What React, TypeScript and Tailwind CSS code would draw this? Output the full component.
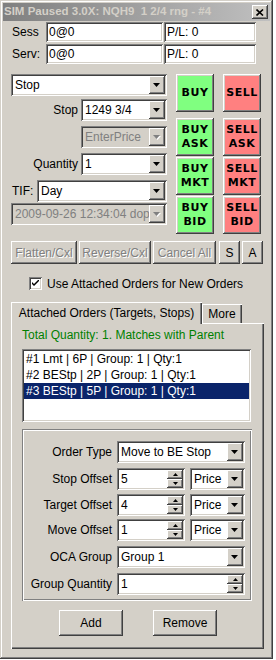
import React from "react";

const raised =
  "shadow-[inset_-1px_-1px_0_#404040,inset_1px_1px_0_#ffffff,inset_-2px_-2px_0_#808080,inset_2px_2px_0_#d4d0c8]";
const sunken =
  "shadow-[inset_1px_1px_0_#808080,inset_-1px_-1px_0_#ffffff,inset_2px_2px_0_#404040,inset_-2px_-2px_0_#d4d0c8]";
const etched =
  "shadow-[inset_1px_1px_0_#808080,inset_-1px_-1px_0_#ffffff,inset_2px_2px_0_#ffffff,inset_-2px_-2px_0_#808080]";
const dimText = "text-[#808080] [text-shadow:1px_1px_0_#ffffff]";

const Arrow = ({ disabled }: { disabled?: boolean }) => (
  <svg width="8" height="5" viewBox="0 0 8 5">
    {disabled && <polygon points="1,1 8,1 4.5,5" fill="#ffffff" />}
    <polygon points="0,0 7,0 3.5,4" fill={disabled ? "#808080" : "#000000"} />
  </svg>
);

const DropBtn = ({ disabled }: { disabled?: boolean }) => (
  <div className={`w-[16px] h-[18px] shrink-0 bg-[#d4d0c8] flex items-center justify-center ${raised}`}>
    <Arrow disabled={disabled} />
  </div>
);

const Select = ({
  value,
  className,
  disabled,
}: {
  value: string;
  className: string;
  disabled?: boolean;
}) => (
  <div
    className={`h-[22px] flex items-center p-[2px] ${sunken} ${
      disabled ? "bg-[#d4d0c8] text-[#808080]" : "bg-white"
    } ${className}`}
  >
    <span className="flex-1 pl-[2px] whitespace-nowrap overflow-hidden">{value}</span>
    <DropBtn disabled={disabled} />
  </div>
);

const SpinBtn = ({ up }: { up?: boolean }) => (
  <div className={`w-[16px] h-[9px] bg-[#d4d0c8] flex items-center justify-center ${raised}`}>
    <svg width="5" height="3" viewBox="0 0 5 3">
      <polygon points={up ? "2.5,0 5,3 0,3" : "0,0 5,0 2.5,3"} fill="#000000" />
    </svg>
  </div>
);

const Spin = ({ value, className }: { value: string; className: string }) => (
  <div className={`h-[22px] flex items-center p-[2px] bg-white ${sunken} ${className}`}>
    <span className="flex-1 pl-[2px]">{value}</span>
    <div className="flex flex-col">
      <SpinBtn up />
      <SpinBtn />
    </div>
  </div>
);

const Trade = ({ top, bottom, buy }: { top: string; bottom?: string; buy?: boolean }) => (
  <div
    className={`w-[38px] h-[38px] flex flex-col items-center justify-center font-['DejaVu_Sans',sans-serif] font-bold text-[11px] leading-[14px] tracking-[0.5px] ${raised} ${
      buy ? "bg-[#80ff80]" : "bg-[#ff8080]"
    }`}
  >
    <span>{top}</span>
    {bottom && <span>{bottom}</span>}
  </div>
);

const Btn = ({
  label,
  className,
  dim,
}: {
  label: string;
  className: string;
  dim?: boolean;
}) => (
  <div
    className={`flex items-center justify-center bg-[#d4d0c8] whitespace-nowrap ${raised} ${
      dim ? dimText : ""
    } ${className}`}
  >
    {label}
  </div>
);

const Row = ({ label, children }: { label: string; children: React.ReactNode }) => (
  <div className="flex items-center">
    <div className="w-[95px] pr-[5px] text-right whitespace-nowrap">{label}</div>
    {children}
  </div>
);

export default function App() {
  const items = [
    "#1 Lmt | 6P | Group: 1 | Qty:1",
    "#2 BEStp | 2P | Group: 1 | Qty:1",
    "#3 BEStp | 5P | Group: 1 | Qty:1",
  ];

  return (
    <div className="w-[276px] h-[660px] bg-white font-['Liberation_Sans',Arial,sans-serif] text-[12px] text-black">
      <div className="w-[273px] h-[659px] bg-[#d4d0c8] p-[3px] shadow-[inset_-1px_-1px_0_#404040,inset_1px_1px_0_#d4d0c8,inset_-2px_-2px_0_#808080,inset_2px_2px_0_#ffffff]">
        {/* title bar */}
        <div className="h-[18px] flex items-center justify-between pl-[1px] pr-[2px] bg-linear-to-r from-[#808080] to-[#c0c0c0]">
          <span className="font-bold text-[11.5px] text-[#d4d0c8] whitespace-pre">
            SIM Paused 3.0X: NQH9  1 2/4 rng - #4
          </span>
          <div className={`w-[16px] h-[14px] bg-[#d4d0c8] flex items-center justify-center ${raised}`}>
            <svg width="8" height="7" viewBox="0 0 8 7">
              <path d="M0.5 0.5 L7 6.5 M7 0.5 L0.5 6.5" stroke="#000" strokeWidth="1.6" />
            </svg>
          </div>
        </div>

        {/* session / server */}
        <div className="mt-[1px] flex items-center h-[20px]">
          <span className="w-[34px] pl-[9px]">Sess</span>
          <div className={`ml-[9px] w-[117px] h-[20px] bg-white flex items-center pl-[3px] ${sunken}`}>0@0</div>
          <div className={`ml-[1px] w-[92px] h-[20px] bg-white flex items-center pl-[3px] ${sunken}`}>P/L: 0</div>
        </div>
        <div className="mt-[2px] flex items-center h-[20px]">
          <span className="w-[34px] pl-[9px]">Serv:</span>
          <div className={`ml-[9px] w-[117px] h-[20px] bg-white flex items-center pl-[3px] ${sunken}`}>0@0</div>
          <div className={`ml-[1px] w-[92px] h-[20px] bg-white flex items-center pl-[3px] ${sunken}`}>P/L: 0</div>
        </div>

        {/* order entry */}
        <div className="mt-[10px] flex">
          <div className="ml-[8px] w-[156px] flex flex-col">
            <Select value="Stop" className="w-[156px]" />
            <div className="mt-[3px] flex items-center">
              <span className="w-[70px] pr-[3px] text-right">Stop</span>
              <Select value="1249 3/4" className="w-[86px]" />
            </div>
            <Select value="EnterPrice" disabled className="mt-[5px] ml-[70px] w-[86px]" />
            <div className="mt-[5px] flex items-center">
              <span className="w-[70px] pr-[3px] text-right">Quantity</span>
              <Select value="1" className="w-[86px]" />
            </div>
            <div className="mt-[5px] flex items-center">
              <span className="w-[26px] pl-[1px]">TIF:</span>
              <Select value="Day" className="w-[130px]" />
            </div>
            <Select value="2009-09-26 12:34:04 dop" disabled className="mt-[1px] w-[156px]" />
          </div>
          <div className="ml-[9px] flex flex-col">
            <div className="flex gap-[9px]">
              <Trade top="BUY" buy />
              <Trade top="SELL" />
            </div>
            <div className="mt-[6px] flex gap-[9px]">
              <Trade top="BUY" bottom="ASK" buy />
              <Trade top="SELL" bottom="ASK" />
            </div>
            <div className="mt-[1px] flex gap-[9px]">
              <Trade top="BUY" bottom="MKT" buy />
              <Trade top="SELL" bottom="MKT" />
            </div>
            <div className="mt-[1px] flex gap-[9px]">
              <Trade top="BUY" bottom="BID" buy />
              <Trade top="SELL" bottom="BID" />
            </div>
          </div>
        </div>

        {/* action buttons */}
        <div className="mt-[7px] ml-[8px] flex h-[23px]">
          <Btn label="Flatten/Cxl" dim className="w-[66px] h-[23px]" />
          <Btn label="Reverse/Cxl" dim className="ml-[2px] w-[72px] h-[23px]" />
          <Btn label="Cancel All" dim className="ml-[2px] w-[63px] h-[23px]" />
          <Btn label="S" className="ml-[3px] w-[21px] h-[23px]" />
          <Btn label="A" className="ml-[2px] w-[21px] h-[23px]" />
        </div>

        {/* checkbox */}
        <div className="mt-[13px] ml-[26px] flex items-center h-[13px]">
          <div className={`w-[13px] h-[13px] bg-white flex items-center justify-center ${sunken}`}>
            <svg width="7" height="7" viewBox="0 0 7 7">
              <path d="M0 2 L0 4 L2 6 L7 1 L7 -1 L2 4 Z" fill="#000" />
            </svg>
          </div>
          <span className="ml-[5px]">Use Attached Orders for New Orders</span>
        </div>

        {/* tabs */}
        <div className="mt-[13px] ml-[8px] flex items-end h-[21px] relative z-10 -mb-px">
          <div className="w-[191px] h-[22px] bg-[#d4d0c8] flex items-center justify-center pb-[1px] shadow-[inset_1px_1px_0_#ffffff,inset_-1px_0_0_#404040,inset_-2px_0_0_#808080]">
            Attached Orders (Targets, Stops)
          </div>
          <div className="w-[40px] h-[19px] mb-px bg-[#d4d0c8] flex items-center justify-center shadow-[inset_1px_1px_0_#ffffff,inset_-1px_0_0_#404040,inset_-2px_0_0_#808080]">
            More
          </div>
        </div>
        <div className="ml-[8px] w-[253px] h-[326px] flex flex-col shadow-[inset_1px_1px_0_#ffffff,inset_-1px_-1px_0_#404040,inset_-2px_-2px_0_#808080]">
          <div className="pl-[11px] pt-[5px] leading-[15px] text-[#008000]">
            Total Quantity: 1. Matches with Parent
          </div>
          <div className={`mt-[6px] ml-[11px] w-[229px] h-[73px] bg-white p-[2px] ${sunken}`}>
            {items.map((t, i) => (
              <div
                key={t}
                className={`h-[16px] leading-[16px] pl-[2px] whitespace-nowrap ${
                  i === 2 ? "bg-[#0a246a] text-white" : ""
                }`}
              >
                {t}
              </div>
            ))}
          </div>

          <div className={`mt-[7px] ml-[11px] w-[230px] h-[172px] pt-[12px] flex flex-col ${etched}`}>
            <Row label="Order Type">
              <Select value="Move to BE Stop" className="w-[128px]" />
            </Row>
            <div className="mt-[5px]">
              <Row label="Stop Offset">
                <Spin value="5" className="w-[68px]" />
                <Select value="Price" className="ml-[5px] w-[55px]" />
              </Row>
            </div>
            <div className="mt-[4px]">
              <Row label="Target Offset">
                <Spin value="4" className="w-[68px]" />
                <Select value="Price" className="ml-[5px] w-[55px]" />
              </Row>
            </div>
            <div className="mt-[3px]">
              <Row label="Move Offset">
                <Spin value="1" className="w-[68px]" />
                <Select value="Price" className="ml-[5px] w-[55px]" />
              </Row>
            </div>
            <div className="mt-[5px]">
              <Row label="OCA Group">
                <Select value="Group 1" className="w-[128px]" />
              </Row>
            </div>
            <div className="mt-[5px]">
              <Row label="Group Quantity">
                <Spin value="1" className="w-[128px]" />
              </Row>
            </div>
          </div>

          <div className="mt-[9px] flex">
            <Btn label="Add" className="ml-[48px] w-[64px] h-[26px]" />
            <Btn label="Remove" className="ml-[30px] w-[64px] h-[26px]" />
          </div>
        </div>
      </div>
    </div>
  );
}
